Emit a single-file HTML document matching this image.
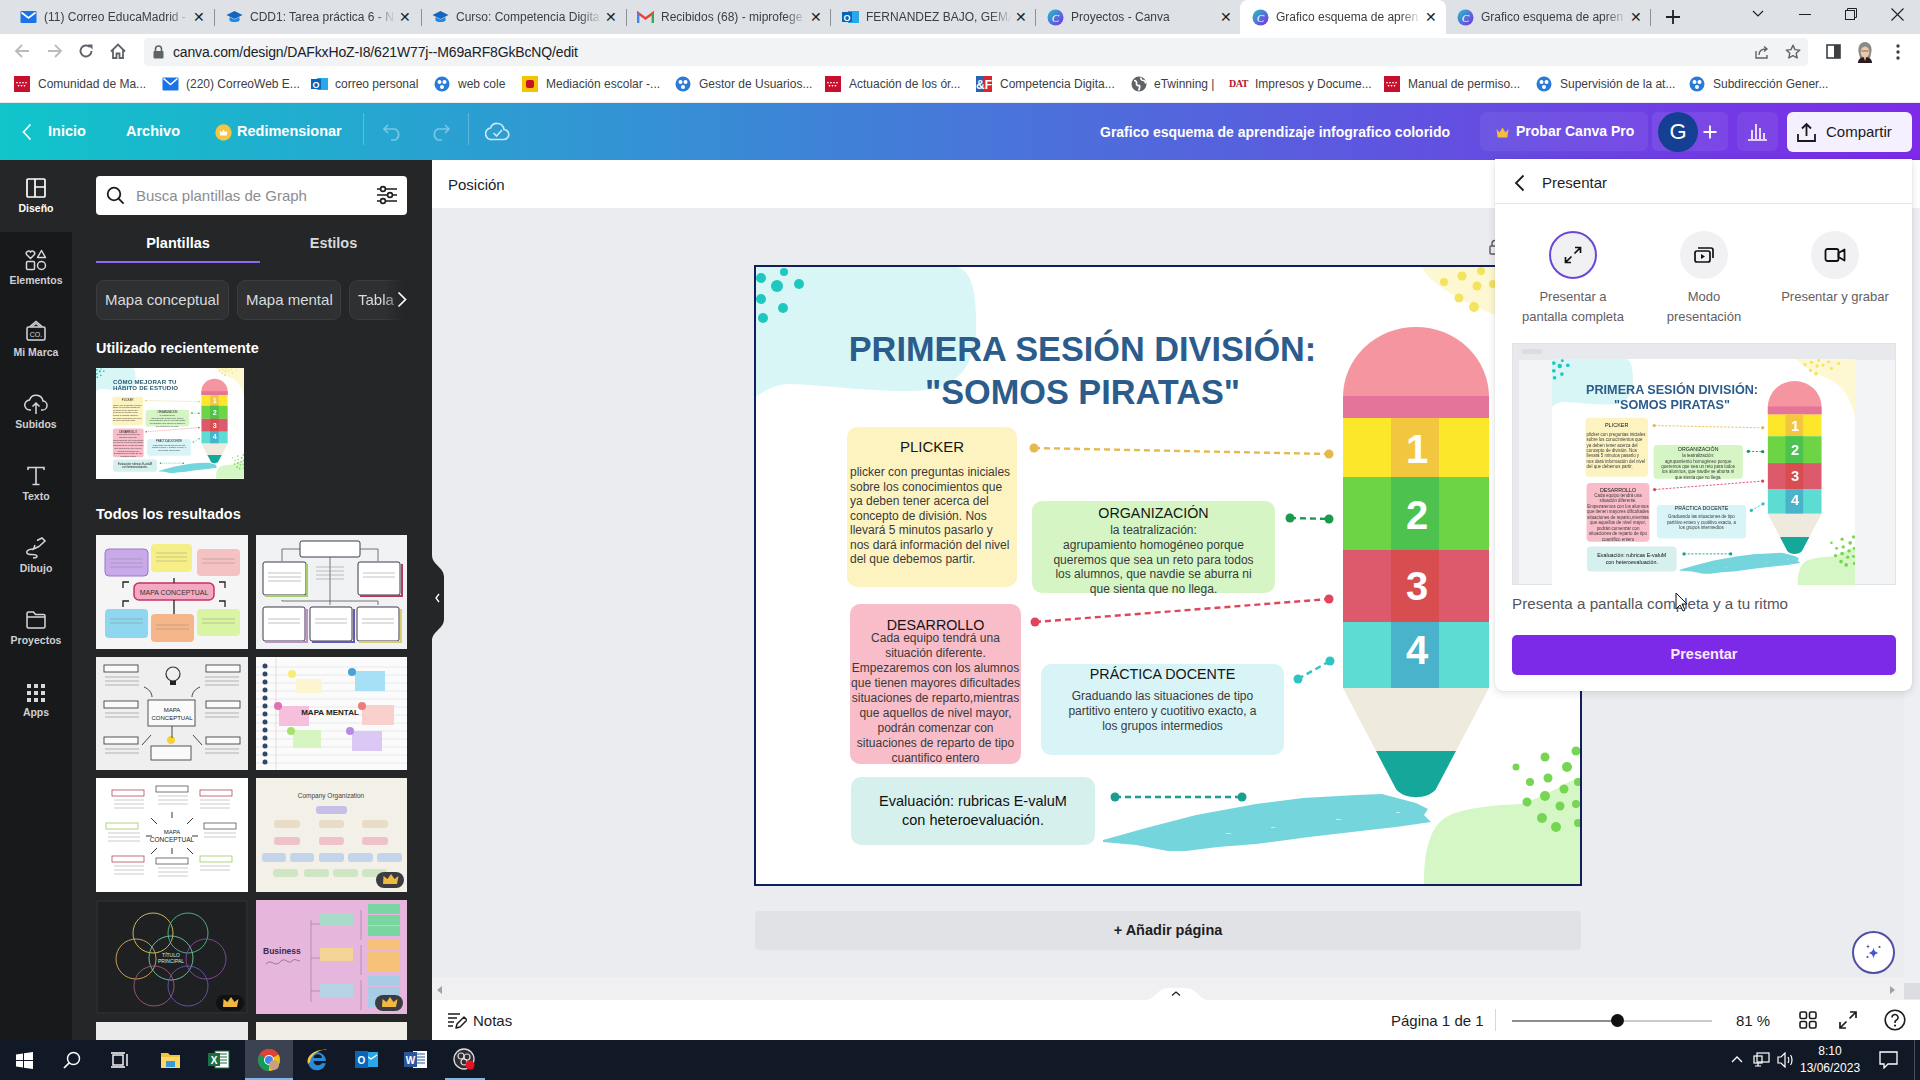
<!DOCTYPE html>
<html><head><meta charset="utf-8">
<style>
*{box-sizing:border-box;margin:0;padding:0}
html,body{width:1920px;height:1080px;overflow:hidden;background:#ebecf0;font-family:"Liberation Sans",sans-serif;position:relative}
.a{position:absolute}
.t{position:absolute;white-space:nowrap}
/* chrome */
#tabbar{left:0;top:0;width:1920px;height:34px;background:#dee1e6}
.tab{position:absolute;top:0;height:34px;width:205px}
.tab .ttl{position:absolute;left:36px;top:10px;font-size:12px;color:#3c4043;width:146px;overflow:hidden;white-space:nowrap;-webkit-mask-image:linear-gradient(90deg,#000 85%,transparent)}
.tab .x{position:absolute;left:185px;top:9px;font-size:14px;color:#202124}
.sep{position:absolute;top:9px;width:1px;height:17px;background:#8d9095}
#toolbar{left:0;top:34px;width:1920px;height:34px;background:#fff}
#omni{left:144px;top:38px;width:1664px;height:28px;background:#f1f3f4;border-radius:4px}
#bm{left:0;top:68px;width:1920px;height:34px;background:#fff}
.bmi{position:absolute;top:77px;font-size:12px;color:#3c4043;white-space:nowrap}
/* canva header */
#hdr{left:0;top:103px;width:1920px;height:57px;background:linear-gradient(90deg,#10c5ca 0%,#7d2ae8 100%)}
.rl{width:72px;text-align:center;font-size:10.5px;font-weight:bold;color:#cfd0d3}
.hw{color:#fff;font-weight:bold;font-size:14.5px}
#rail{left:0;top:160px;width:72px;height:880px;background:#18191b}
.chip{height:40px;border-radius:8px;background:#2f3032;border:1px solid #3b3c3f;color:#d9dadd;font-size:15px;line-height:38px;padding-left:8px;white-space:nowrap;overflow:hidden}
.dt{position:absolute;white-space:nowrap}
.db{position:absolute;border-radius:10px}
#panel{left:72px;top:160px;width:360px;height:880px;background:#252627}
#posbar{left:432px;top:160px;width:1488px;height:48px;background:#fff}
#botbar{left:432px;top:1000px;width:1488px;height:40px;background:#fff}
#taskbar{left:0;top:1040px;width:1920px;height:40px;background:#121926}
</style></head><body>
<!-- TAB BAR -->
<div id="tabbar" class="a">
 <!-- tab1 -->
 <div class="tab" style="left:8px">
  <svg class="a" style="left:12px;top:9px" width="17" height="16" viewBox="0 0 17 16"><rect x="0.5" y="2" width="16" height="12" rx="1" fill="#1a73e8"/><path d="M1.5 3.5 L8.5 9 L15.5 3.5" stroke="#fff" stroke-width="1.6" fill="none"/></svg>
  <div class="ttl">(11) Correo EducaMadrid -</div><div class="x">✕</div></div>
 <div class="sep" style="left:214px"></div>
 <div class="tab" style="left:214px">
  <svg class="a" style="left:12px;top:9px" width="17" height="16" viewBox="0 0 17 16"><path d="M8.5 2 L16.5 6 L8.5 10 L0.5 6Z" fill="#1565c0"/><path d="M3.5 8 V11.5 C5 13.5 12 13.5 13.5 11.5 V8 L8.5 10.5Z" fill="#1e88e5"/></svg>
  <div class="ttl">CDD1: Tarea práctica 6 - N</div><div class="x">✕</div></div>
 <div class="sep" style="left:421px"></div>
 <div class="tab" style="left:420px">
  <svg class="a" style="left:12px;top:9px" width="17" height="16" viewBox="0 0 17 16"><path d="M8.5 2 L16.5 6 L8.5 10 L0.5 6Z" fill="#1565c0"/><path d="M3.5 8 V11.5 C5 13.5 12 13.5 13.5 11.5 V8 L8.5 10.5Z" fill="#1e88e5"/></svg>
  <div class="ttl">Curso: Competencia Digita</div><div class="x">✕</div></div>
 <div class="sep" style="left:626px"></div>
 <div class="tab" style="left:625px">
  <svg class="a" style="left:12px;top:10px" width="17" height="14" viewBox="0 0 17 14"><path d="M1 13V3l7.5 5.5L16 3v10" fill="none" stroke="#ea4335" stroke-width="2.4"/><path d="M1 13V3" stroke="#4285f4" stroke-width="2.4"/><path d="M16 13V3" stroke="#34a853" stroke-width="2.4"/></svg>
  <div class="ttl">Recibidos (68) - miprofege</div><div class="x">✕</div></div>
 <div class="sep" style="left:830px"></div>
 <div class="tab" style="left:830px">
  <svg class="a" style="left:12px;top:9px" width="17" height="16" viewBox="0 0 17 16"><rect x="6" y="2" width="11" height="12" fill="#28a8ea"/><rect x="0" y="3" width="10" height="10" fill="#0a64b8"/><text x="5" y="11.5" font-size="9" font-weight="bold" fill="#fff" text-anchor="middle" font-family="Liberation Sans">O</text></svg>
  <div class="ttl">FERNANDEZ BAJO, GEMA</div><div class="x">✕</div></div>
 <div class="sep" style="left:1035px"></div>
 <div class="tab" style="left:1035px">
  <svg class="a" style="left:12px;top:9px" width="17" height="17" viewBox="0 0 17 17"><defs><linearGradient id="cg" x1="0" y1="0" x2="1" y2="1"><stop offset="0" stop-color="#23c4c4"/><stop offset="1" stop-color="#7d2ae8"/></linearGradient></defs><circle cx="8.5" cy="8.5" r="8" fill="url(#cg)"/><text x="8.5" y="12.5" font-size="11" font-style="italic" fill="#fff" text-anchor="middle" font-family="Liberation Serif">C</text></svg>
  <div class="ttl">Proyectos - Canva</div><div class="x">✕</div></div>
 <!-- active -->
 <div class="a" style="left:1240px;top:0;width:206px;height:34px;background:#fff;border-radius:8px 8px 0 0"></div>
 <div class="tab" style="left:1240px">
  <svg class="a" style="left:12px;top:9px" width="17" height="17" viewBox="0 0 17 17"><circle cx="8.5" cy="8.5" r="8" fill="url(#cg)"/><text x="8.5" y="12.5" font-size="11" font-style="italic" fill="#fff" text-anchor="middle" font-family="Liberation Serif">C</text></svg>
  <div class="ttl">Grafico esquema de apren</div><div class="x">✕</div></div>
 <div class="tab" style="left:1445px">
  <svg class="a" style="left:12px;top:9px" width="17" height="17" viewBox="0 0 17 17"><circle cx="8.5" cy="8.5" r="8" fill="url(#cg)"/><text x="8.5" y="12.5" font-size="11" font-style="italic" fill="#fff" text-anchor="middle" font-family="Liberation Serif">C</text></svg>
  <div class="ttl">Grafico esquema de apren</div><div class="x">✕</div></div>
 <div class="sep" style="left:1650px"></div>
 <svg class="a" style="left:1665px;top:9px" width="16" height="16" viewBox="0 0 16 16"><path d="M8 1v14M1 8h14" stroke="#202124" stroke-width="1.8"/></svg>
 <svg class="a" style="left:1752px;top:10px" width="12" height="8" viewBox="0 0 12 8"><path d="M1 1l5 5 5-5" stroke="#202124" stroke-width="1.2" fill="none"/></svg>
 <svg class="a" style="left:1799px;top:14px" width="12" height="2"><rect width="12" height="1" fill="#202124"/></svg>
 <svg class="a" style="left:1845px;top:8px" width="12" height="12" viewBox="0 0 12 12"><rect x="0.5" y="2.5" width="9" height="9" fill="none" stroke="#202124"/><path d="M2.5 2.5V0.5h9v9h-2" fill="none" stroke="#202124"/></svg>
 <svg class="a" style="left:1891px;top:8px" width="13" height="13" viewBox="0 0 13 13"><path d="M0.5 0.5l12 12M12.5 0.5l-12 12" stroke="#202124" stroke-width="1.1"/></svg>
</div>
<!-- TOOLBAR -->
<div id="toolbar" class="a">
 <svg class="a" style="left:14px;top:9px" width="16" height="16" viewBox="0 0 16 16"><path d="M15 8H2M8 2L2 8l6 6" stroke="#b9bbbe" stroke-width="1.8" fill="none"/></svg>
 <svg class="a" style="left:47px;top:9px" width="16" height="16" viewBox="0 0 16 16"><path d="M1 8h13M8 2l6 6-6 6" stroke="#b9bbbe" stroke-width="1.8" fill="none"/></svg>
 <svg class="a" style="left:78px;top:9px" width="16" height="16" viewBox="0 0 16 16"><path d="M13.5 8A5.5 5.5 0 1 1 11.8 4" stroke="#5f6368" stroke-width="1.9" fill="none"/><path d="M9.5 1.5h5v5z" fill="#5f6368"/></svg>
 <svg class="a" style="left:109px;top:8px" width="18" height="18" viewBox="0 0 18 18"><path d="M2 9.5L9 2.5l7 7M4 8v8h3.5v-4.5h3V16H14V8" stroke="#5f6368" stroke-width="1.8" fill="none"/></svg>
</div>
<div id="omni" class="a">
 <svg class="a" style="left:9px;top:7px" width="11" height="14" viewBox="0 0 11 14"><path d="M2.5 6V4a3 3 0 0 1 6 0v2" stroke="#5f6368" stroke-width="1.6" fill="none"/><rect x="0.5" y="6" width="10" height="7.5" rx="1" fill="#5f6368"/></svg>
 <div class="t" style="left:29px;top:6px;font-size:14px;color:#202124;letter-spacing:-0.15px">canva.com/design/DAFkxHoZ-I8/621W77j--M69aRF8GkBcNQ/edit</div>
 <svg class="a" style="left:1609px;top:6px" width="17" height="16" viewBox="0 0 17 16"><path d="M3 7v7h11v-3" stroke="#5f6368" stroke-width="1.4" fill="none"/><path d="M6 11c0-4 3-6 7-6M11 2.5l3 2.5-3 2.5" stroke="#5f6368" stroke-width="1.4" fill="none"/></svg>
 <svg class="a" style="left:1641px;top:6px" width="16" height="16" viewBox="0 0 16 16"><path d="M8 1.2l2 4.4 4.8.5-3.6 3.2 1 4.7L8 11.6 3.8 14l1-4.7L1.2 6.1l4.8-.5z" stroke="#5f6368" stroke-width="1.4" fill="none" stroke-linejoin="round"/></svg>
</div>
<svg class="a" style="left:1826px;top:44px" width="15" height="15" viewBox="0 0 15 15"><rect x="1" y="1" width="13" height="13" fill="none" stroke="#3c4043" stroke-width="1.6"/><rect x="8" y="1" width="6" height="13" fill="#3c4043"/></svg>
<svg class="a" style="left:1857px;top:42px" width="16" height="21" viewBox="0 0 16 21"><path d="M2 12C0 5 3 0 8 0s8 5 6 12l-1 4H3z" fill="#8a8a86"/><ellipse cx="8" cy="10" rx="4.3" ry="5.5" fill="#ecc9a8"/><path d="M4.5 9h7" stroke="#555" stroke-width="0.8"/><path d="M1 21c0-4 3-6 7-6s7 2 7 6z" fill="#2a1c1e"/><path d="M6.5 15l1.5 4 1.5-4" fill="#e8a8b0"/></svg>
<svg class="a" style="left:1896px;top:44px" width="4" height="16" viewBox="0 0 4 16"><circle cx="2" cy="2" r="1.7" fill="#3c4043"/><circle cx="2" cy="8" r="1.7" fill="#3c4043"/><circle cx="2" cy="14" r="1.7" fill="#3c4043"/></svg>
<!-- BOOKMARKS -->
<div id="bm" class="a"></div>
<svg class="a" style="left:14px;top:76px" width="16" height="16" viewBox="0 0 16 16"><rect width="16" height="16" fill="#c8102e"/><g fill="#fff"><path d="M2 6l1 2 1-2zM5 6l1 2 1-2zM8 6l1 2 1-2zM11 6l1 2 1-2zM3.5 9l1 2 1-2zM6.5 9l1 2 1-2zM9.5 9l1 2 1-2z"/></g></svg>
<div class="bmi" style="left:38px">Comunidad de Ma...</div>
<svg class="a" style="left:162px;top:77px" width="17" height="14" viewBox="0 0 17 14"><rect x="0.5" y="0.5" width="16" height="13" rx="1" fill="#1a73e8"/><path d="M1.5 1.5 L8.5 7.5 L15.5 1.5" stroke="#fff" stroke-width="1.6" fill="none"/></svg>
<div class="bmi" style="left:186px">(220) CorreoWeb E...</div>
<svg class="a" style="left:311px;top:76px" width="17" height="16" viewBox="0 0 17 16"><rect x="6" y="2" width="11" height="12" fill="#28a8ea"/><rect x="0" y="3" width="10" height="10" fill="#0a64b8"/><text x="5" y="11.5" font-size="9" font-weight="bold" fill="#fff" text-anchor="middle" font-family="Liberation Sans">O</text></svg>
<div class="bmi" style="left:335px">correo personal</div>
<svg class="a" style="left:434px;top:76px" width="16" height="16" viewBox="0 0 16 16"><circle cx="8" cy="8" r="7.5" fill="#2a7bd6"/><circle cx="5.5" cy="6" r="2" fill="#fff"/><circle cx="10.5" cy="6" r="2" fill="#fff"/><circle cx="8" cy="11" r="2" fill="#fff"/></svg>
<div class="bmi" style="left:458px">web cole</div>
<div class="a" style="left:522px;top:76px;width:16px;height:16px;background:#f5c400"><div class="a" style="left:4px;top:4px;width:8px;height:8px;background:#c8102e;border-radius:2px"></div></div>
<div class="bmi" style="left:546px">Mediación escolar -...</div>
<svg class="a" style="left:675px;top:76px" width="16" height="16" viewBox="0 0 16 16"><circle cx="8" cy="8" r="7.5" fill="#2a7bd6"/><circle cx="5.5" cy="6" r="2" fill="#fff"/><circle cx="10.5" cy="6" r="2" fill="#fff"/><circle cx="8" cy="11" r="2" fill="#fff"/></svg>
<div class="bmi" style="left:699px">Gestor de Usuarios...</div>
<svg class="a" style="left:825px;top:76px" width="16" height="16" viewBox="0 0 16 16"><rect width="16" height="16" fill="#c8102e"/><g fill="#fff"><path d="M2 6l1 2 1-2zM5 6l1 2 1-2zM8 6l1 2 1-2zM11 6l1 2 1-2zM3.5 9l1 2 1-2zM6.5 9l1 2 1-2zM9.5 9l1 2 1-2z"/></g></svg>
<div class="bmi" style="left:849px">Actuación de los ór...</div>
<svg class="a" style="left:976px;top:76px" width="16" height="16" viewBox="0 0 16 16"><rect width="8" height="16" fill="#2e5fb0"/><rect x="8" width="8" height="16" fill="#d8262e"/><text x="8" y="13" font-size="12" font-weight="bold" fill="#fff" text-anchor="middle" font-family="Liberation Sans">&amp;F</text></svg>
<div class="bmi" style="left:1000px">Competencia Digita...</div>
<svg class="a" style="left:1131px;top:76px" width="16" height="16" viewBox="0 0 16 16"><circle cx="8" cy="8" r="7.5" fill="#5f6368"/><path d="M3 4.5c2 0 3 1.5 2.5 3S7 10 8 9.5s1 3-.5 5M10 1.5c-.5 2 1 3 2.5 3s2 1.5 2 3" stroke="#fff" stroke-width="1.7" fill="none"/></svg>
<div class="bmi" style="left:1154px">eTwinning |</div>
<div class="t" style="left:1229px;top:78px;font-size:10px;font-weight:bold;color:#b5132b;font-family:'Liberation Serif',serif;letter-spacing:-0.5px">DAT</div>
<div class="bmi" style="left:1255px">Impresos y Docume...</div>
<svg class="a" style="left:1384px;top:76px" width="16" height="16" viewBox="0 0 16 16"><rect width="16" height="16" fill="#c8102e"/><g fill="#fff"><path d="M2 6l1 2 1-2zM5 6l1 2 1-2zM8 6l1 2 1-2zM11 6l1 2 1-2zM3.5 9l1 2 1-2zM6.5 9l1 2 1-2zM9.5 9l1 2 1-2z"/></g></svg>
<div class="bmi" style="left:1408px">Manual de permiso...</div>
<svg class="a" style="left:1536px;top:76px" width="16" height="16" viewBox="0 0 16 16"><circle cx="8" cy="8" r="7.5" fill="#2a7bd6"/><circle cx="5.5" cy="6" r="2" fill="#fff"/><circle cx="10.5" cy="6" r="2" fill="#fff"/><circle cx="8" cy="11" r="2" fill="#fff"/></svg>
<div class="bmi" style="left:1560px">Supervisión de la at...</div>
<svg class="a" style="left:1689px;top:76px" width="16" height="16" viewBox="0 0 16 16"><circle cx="8" cy="8" r="7.5" fill="#2a7bd6"/><circle cx="5.5" cy="6" r="2" fill="#fff"/><circle cx="10.5" cy="6" r="2" fill="#fff"/><circle cx="8" cy="11" r="2" fill="#fff"/></svg>
<div class="bmi" style="left:1713px">Subdirección Gener...</div>
<div id="hdr" class="a">
 <svg class="a" style="left:22px;top:20px" width="10" height="18" viewBox="0 0 10 18"><path d="M8.5 1.5L1.5 9l7 7.5" stroke="#fff" stroke-width="1.6" fill="none"/></svg>
 <div class="t hw" style="left:48px;top:20px">Inicio</div>
 <div class="t hw" style="left:126px;top:20px">Archivo</div>
 <svg class="a" style="left:215px;top:21px" width="17" height="17" viewBox="0 0 17 17"><circle cx="8.5" cy="8.5" r="8.2" fill="#f2c544"/><path d="M4.5 6.5l2 2 2-3 2 3 2-2-.8 5H5.3z" fill="#fff"/></svg>
 <div class="t hw" style="left:237px;top:20px">Redimensionar</div>
 <div class="a" style="left:363px;top:10px;width:1px;height:32px;background:rgba(255,255,255,0.25)"></div>
 <svg class="a" style="left:382px;top:20px" width="22" height="18" viewBox="0 0 22 18"><path d="M6 2L2 6l4 4M2 6h11a6 6 0 0 1 0 11H9" stroke="rgba(255,255,255,0.38)" stroke-width="1.7" fill="none"/></svg>
 <svg class="a" style="left:429px;top:20px" width="22" height="18" viewBox="0 0 22 18"><path d="M16 2l4 4-4 4M20 6H9a6 6 0 0 0 0 11h4" stroke="rgba(255,255,255,0.38)" stroke-width="1.7" fill="none"/></svg>
 <div class="a" style="left:468px;top:10px;width:1px;height:32px;background:rgba(255,255,255,0.25)"></div>
 <svg class="a" style="left:485px;top:18px" width="25" height="20" viewBox="0 0 25 20"><path d="M7 18.5h11.5a5 5 0 0 0 .5-10A7 7 0 0 0 5.5 7 5.8 5.8 0 0 0 7 18.5z" stroke="rgba(255,255,255,0.75)" stroke-width="1.7" fill="none"/><path d="M8.5 12l3 3 5.5-6" stroke="rgba(255,255,255,0.75)" stroke-width="1.7" fill="none"/></svg>
 <div class="t hw" style="left:1100px;top:21px;font-size:14px">Grafico esquema de aprendizaje infografico colorido</div>
 <div class="a" style="left:1480px;top:9px;width:168px;height:39px;border-radius:6px;background:rgba(255,255,255,0.06)"></div>
 <svg class="a" style="left:1496px;top:24px" width="13" height="11" viewBox="0 0 13 11"><path d="M0.5 2l3 3.5L6.5 0.5l3 5 3-3.5-1.2 8.5H1.7z" fill="#f4bd3f"/></svg>
 <div class="t hw" style="left:1516px;top:20px;font-size:14px">Probar Canva Pro</div>
 <div class="a" style="left:1652px;top:9px;width:76px;height:39px;border-radius:6px;background:rgba(255,255,255,0.07)"></div>
 <div class="a" style="left:1658px;top:9px;width:40px;height:40px;border-radius:50%;background:#153f92;color:#fff;font-size:22px;text-align:center;line-height:40px">G</div>
 <svg class="a" style="left:1703px;top:22px" width="14" height="14" viewBox="0 0 14 14"><path d="M7 0.5v13M0.5 7h13" stroke="#fff" stroke-width="1.8"/></svg>
 <div class="a" style="left:1737px;top:9px;width:41px;height:39px;border-radius:6px;background:rgba(255,255,255,0.07)"></div>
 <svg class="a" style="left:1747px;top:18px" width="21" height="20" viewBox="0 0 21 20"><path d="M1 19h19M5 18V9M9 18V3M13 18V7M17 18V12" stroke="#fff" stroke-width="1.6"/></svg>
 <div class="a" style="left:1787px;top:9px;width:125px;height:40px;border-radius:6px;background:#f5f0fd"></div>
 <svg class="a" style="left:1796px;top:19px" width="21" height="21" viewBox="0 0 21 21"><path d="M10.5 14V2M6 6.5l4.5-4.5 4.5 4.5M2 12v7h17v-7" stroke="#191a1c" stroke-width="1.8" fill="none"/></svg>
 <div class="t" style="left:1826px;top:20px;font-size:15px;color:#191a1c">Compartir</div>
</div>
<div id="rail" class="a"></div>
<div class="a" style="left:0;top:160px;width:72px;height:72px;background:#252627"></div>
<svg class="a" style="left:26px;top:178px" width="20" height="20" viewBox="0 0 20 20"><rect x="1" y="1" width="18" height="18" rx="1" fill="none" stroke="#fff" stroke-width="1.7"/><path d="M9 1v18M9 9h10" stroke="#fff" stroke-width="1.7"/></svg>
<div class="t rl" style="left:0;top:202px;color:#fff">Diseño</div>
<svg class="a" style="left:25px;top:249px" width="22" height="22" viewBox="0 0 22 22"><path d="M5.5 9.5L1.8 5.8A2.2 2.2 0 0 1 5.5 3 2.2 2.2 0 0 1 9.2 5.8z" stroke="#d6d7da" stroke-width="1.5" fill="none"/><path d="M16.5 1.5l4 7h-8z" stroke="#d6d7da" stroke-width="1.5" fill="none" stroke-linejoin="round"/><rect x="1.5" y="12.5" width="8" height="8" rx="1" stroke="#d6d7da" stroke-width="1.5" fill="none"/><circle cx="16.5" cy="16.5" r="4" stroke="#d6d7da" stroke-width="1.5" fill="none"/></svg>
<div class="t rl" style="left:0;top:274px">Elementos</div>
<svg class="a" style="left:26px;top:320px" width="20" height="22" viewBox="0 0 20 22"><path d="M4 6.5l6-5 6 5" stroke="#d6d7da" stroke-width="1.5" fill="none"/><path d="M6 6.5l4-3 4 3" stroke="#d6d7da" stroke-width="1.2" fill="none"/><rect x="1" y="7" width="18" height="13" rx="1.5" stroke="#d6d7da" stroke-width="1.5" fill="none"/><text x="10" y="17" font-size="7" fill="#d6d7da" text-anchor="middle" font-family="Liberation Sans">CO.</text></svg>
<div class="t rl" style="left:0;top:346px">Mi Marca</div>
<svg class="a" style="left:24px;top:393px" width="24" height="22" viewBox="0 0 24 22"><path d="M7 17H6a5 5 0 0 1-.5-10A7 7 0 0 1 19 8a4.5 4.5 0 0 1-1 9h-1" stroke="#d6d7da" stroke-width="1.5" fill="none"/><path d="M12 21V10M8.5 13.5L12 10l3.5 3.5" stroke="#d6d7da" stroke-width="1.5" fill="none"/></svg>
<div class="t rl" style="left:0;top:418px">Subidos</div>
<svg class="a" style="left:26px;top:466px" width="20" height="20" viewBox="0 0 20 20"><path d="M2 4V1.5h16V4M10 1.5V18.5M6.5 18.5h7" stroke="#d6d7da" stroke-width="1.6" fill="none"/></svg>
<div class="t rl" style="left:0;top:490px">Texto</div>
<svg class="a" style="left:25px;top:537px" width="22" height="22" viewBox="0 0 22 22"><path d="M12 3.5l5-2.5 3 3-6 5.5M14 9.5L8.5 12l1.5-4" stroke="#d6d7da" stroke-width="1.5" fill="none"/><path d="M9 12c-4 0-8 1-7 4s9 0 10 3c.5 1.5-2 2-4 2" stroke="#d6d7da" stroke-width="1.5" fill="none"/></svg>
<div class="t rl" style="left:0;top:562px">Dibujo</div>
<svg class="a" style="left:26px;top:611px" width="20" height="18" viewBox="0 0 20 18"><path d="M1 2.5a1.5 1.5 0 0 1 1.5-1.5h5l2 2.5h8A1.5 1.5 0 0 1 19 5v10.5A1.5 1.5 0 0 1 17.5 17h-15A1.5 1.5 0 0 1 1 15.5z" stroke="#d6d7da" stroke-width="1.5" fill="none"/><path d="M1 6h18" stroke="#d6d7da" stroke-width="1.5"/></svg>
<div class="t rl" style="left:0;top:634px">Proyectos</div>
<svg class="a" style="left:27px;top:684px" width="18" height="18" viewBox="0 0 18 18"><g fill="#d6d7da"><rect x="0" y="0" width="4" height="4"/><rect x="7" y="0" width="4" height="4"/><rect x="14" y="0" width="4" height="4"/><rect x="0" y="7" width="4" height="4"/><rect x="7" y="7" width="4" height="4"/><rect x="14" y="7" width="4" height="4"/><rect x="0" y="14" width="4" height="4"/><rect x="7" y="14" width="4" height="4"/><rect x="14" y="14" width="4" height="4"/></g></svg>
<div class="t rl" style="left:0;top:706px">Apps</div>
<div id="panel" class="a"></div>
<div class="a" style="left:96px;top:176px;width:311px;height:39px;background:#fff;border-radius:4px"></div>
<svg class="a" style="left:106px;top:186px" width="20" height="20" viewBox="0 0 20 20"><circle cx="8" cy="8" r="6.3" stroke="#1d1d1f" stroke-width="1.8" fill="none"/><path d="M12.6 12.6l5 5" stroke="#1d1d1f" stroke-width="1.9"/></svg>
<div class="t" style="left:136px;top:187px;font-size:15px;color:#8c8c90">Busca plantillas de Graph</div>
<svg class="a" style="left:376px;top:185px" width="21" height="20" viewBox="0 0 21 20"><g stroke="#1d1d1f" stroke-width="1.6" fill="none"><path d="M1 4h20M1 10h20M1 16h20"/><circle cx="7" cy="4" r="2.4" fill="#fff"/><circle cx="14" cy="10" r="2.4" fill="#fff"/><circle cx="7" cy="16" r="2.4" fill="#fff"/></g></svg>
<div class="t" style="left:96px;top:235px;width:164px;text-align:center;font-size:14.5px;font-weight:bold;color:#fff">Plantillas</div>
<div class="t" style="left:260px;top:235px;width:147px;text-align:center;font-size:14.5px;font-weight:bold;color:#d8d9dc">Estilos</div>
<div class="a" style="left:96px;top:261px;width:164px;height:2px;background:#8b6cf0"></div>
<div class="a chip" style="left:96px;top:280px;width:133px">Mapa conceptual</div>
<div class="a chip" style="left:237px;top:280px;width:104px">Mapa mental</div>
<div class="a chip" style="left:349px;top:280px;width:58px;-webkit-mask-image:linear-gradient(90deg,#000 60%,transparent 95%)">Tabla</div>
<svg class="a" style="left:397px;top:291px" width="10" height="17" viewBox="0 0 10 17"><path d="M1.5 1.5l7 7-7 7" stroke="#fff" stroke-width="1.7" fill="none"/></svg>
<div class="t" style="left:96px;top:340px;font-size:14.5px;font-weight:bold;color:#fff">Utilizado recientemente</div>
<div class="a" style="left:96px;top:368px;width:148px;height:111px;overflow:hidden;background:#fff"><div style="position:absolute;left:0;top:0;width:824px;height:617px;transform:scale(0.1796);transform-origin:0 0"><div class="dz" style="position:absolute;left:0;top:0;width:824px;height:617px;background:#fff;overflow:hidden">
 <svg style="position:absolute;left:0;top:0" width="824" height="617" viewBox="0 0 824 617">
  <path d="M0 0 H200 C214 2 221 20 220 64 C219 95 205 118 170 123 C130 127 70 118 35 117 C18 117 8 124 0 130 Z" fill="#d9f6f6"/>
  <g fill="#1ec8be"><circle cx="5" cy="11" r="5"/><circle cx="28" cy="5" r="4"/><circle cx="21" cy="19" r="6"/><circle cx="43" cy="17" r="5"/><circle cx="5" cy="32" r="5"/><circle cx="27" cy="41" r="5"/><circle cx="7" cy="51" r="5"/></g>
  <path d="M667 0 H824 V155 C815 120 803 92 775 68 C750 50 705 36 682 18 C672 10 667 4 667 0Z" fill="#fdf7d2"/>
  <g fill="#f4e35e"><circle cx="688" cy="15" r="4"/><circle cx="706" cy="9" r="4.5"/><circle cx="725" cy="4" r="4"/><circle cx="721" cy="19" r="4.5"/><circle cx="703" cy="31" r="4.5"/><circle cx="718" cy="40" r="5"/><circle cx="737" cy="17" r="4"/><circle cx="752" cy="8" r="4"/><circle cx="760" cy="26" r="4"/><circle cx="780" cy="12" r="4"/></g>
  <path d="M668 617 C668 580 675 560 690 550 C710 540 740 538 764 537 C790 530 810 515 824 510 V617Z" fill="#d5f7c5"/>
  <g fill="#76d653"><circle cx="789" cy="490" r="4.5"/><circle cx="820" cy="484" r="4.5"/><circle cx="811" cy="500" r="5"/><circle cx="792" cy="511" r="4.5"/><circle cx="774" cy="515" r="4"/><circle cx="808" cy="522" r="4.5"/><circle cx="822" cy="515" r="4"/><circle cx="789" cy="529" r="5"/><circle cx="771" cy="535" r="4.5"/><circle cx="804" cy="539" r="4.5"/><circle cx="820" cy="537" r="4"/><circle cx="786" cy="551" r="5"/><circle cx="800" cy="560" r="5"/><circle cx="822" cy="556" r="4"/><circle cx="760" cy="500" r="3.5"/></g>
  <path d="M347 573 L390 561 L440 548 L500 537 L547 531 L600 528 L626 527 L660 536 L672 542 L668 548 L675 555 L640 560 L622 562 L553 570 L500 577 L462 580 L430 584 L412 584 L380 578 L347 575Z" fill="#75d5dc"/>
  <g fill="#fff" opacity="0.6"><rect x="470" y="566" width="5" height="1"/><rect x="515" y="560" width="4" height="1"/><rect x="580" y="552" width="5" height="1"/><rect x="640" y="545" width="4" height="1"/></g>
  <!-- pencil -->
  <path d="M587 130 A73 70 0 0 1 733 130 V151 H587Z" fill="#f5959f"/>
  <rect x="587" y="129" width="146" height="22" fill="#e4749a"/>
  <rect x="587" y="151" width="146" height="59" fill="#fde72b"/><rect x="635" y="151" width="48" height="59" fill="#f2c73f"/>
  <rect x="587" y="210" width="146" height="73" fill="#6cd445"/><rect x="635" y="210" width="48" height="73" fill="#4dc24e"/>
  <rect x="587" y="283" width="146" height="72" fill="#dd5a6d"/><rect x="635" y="283" width="48" height="72" fill="#d84d50"/>
  <rect x="587" y="355" width="146" height="66" fill="#5cdcd3"/><rect x="635" y="355" width="48" height="66" fill="#4ab3cc"/>
  <path d="M587 421 H733 L700 484 H620Z" fill="#eeeadd"/>
  <path d="M620 484 H700 L680 522 C672 533 648 533 640 522Z" fill="#15a799"/>
  <g fill="#fff" font-family="Liberation Sans" font-weight="bold" font-size="40" text-anchor="middle"><text x="661" y="196">1</text><text x="661" y="262">2</text><text x="661" y="333">3</text><text x="661" y="397">4</text></g>
  <!-- connectors -->
  <g stroke-width="2.4" stroke-dasharray="6 4" fill="none">
   <path d="M278 181 L573 187" stroke="#e6b94c"/>
   <path d="M534 251 L573 252" stroke="#1a9a4c"/>
   <path d="M279 355 L573 332" stroke="#e0455c"/>
   <path d="M542 412 L574 394" stroke="#2fc3c3"/>
   <path d="M359 530 L486 530" stroke="#1b9e8f"/>
  </g>
  <g><circle cx="278" cy="181" r="4.5" fill="#e6b94c"/><circle cx="573" cy="187" r="4.5" fill="#e6b94c"/>
  <circle cx="534" cy="251" r="4.5" fill="#1a9a4c"/><circle cx="573" cy="252" r="4.5" fill="#1a9a4c"/>
  <circle cx="279" cy="355" r="4.5" fill="#e0455c"/><circle cx="573" cy="332" r="4.5" fill="#e0455c"/>
  <circle cx="542" cy="412" r="4.5" fill="#2fc3c3"/><circle cx="574" cy="394" r="4.5" fill="#2fc3c3"/>
  <circle cx="359" cy="530" r="4.5" fill="#1b9e8f"/><circle cx="486" cy="530" r="4.5" fill="#1b9e8f"/></g>
 </svg>
 <div class="dt" style="left:94px;top:62px;font-size:34px;line-height:33px;font-weight:bold;color:#2a5a72;letter-spacing:1px">CÓMO MEJORAR TU<br>HÁBITO DE ESTUDIO</div>
 <div class="db" style="left:91px;top:160px;width:170px;height:160px;background:#fdf3c1"></div>
 <div class="dt" style="left:91px;top:171px;width:170px;text-align:center;font-size:15px;color:#151515">PLICKER</div>
 <div class="dt" style="left:94px;top:198px;width:170px;font-size:12px;line-height:14.5px;color:#3a3a3a">plicker con preguntas iniciales<br>sobre los conocimientos que<br>ya deben tener acerca del<br>concepto de división. Nos<br>llevará 5 minutos pasarlo y<br>nos dará información del nivel<br>del que debemos partir.</div>
 <div class="db" style="left:276px;top:234px;width:243px;height:92px;background:#d5f5c5"></div>
 <div class="dt" style="left:276px;top:238px;width:243px;text-align:center;font-size:14.3px;color:#151515">ORGANIZACIÓN</div>
 <div class="dt" style="left:266px;top:256px;width:263px;text-align:center;font-size:12px;line-height:14.8px;color:#3a3a3a">la teatralización:<br>agrupamiento homogéneo porque<br>queremos que sea un reto para todos<br>los alumnos, que navdie se aburra ni<br>que sienta que no llega.</div>
 <div class="db" style="left:94px;top:337px;width:171px;height:160px;background:#f8bdc8"></div>
 <div class="dt" style="left:94px;top:350px;width:171px;text-align:center;font-size:14.3px;color:#151515">DESARROLLO</div>
 <div class="dt" style="left:84px;top:364px;width:191px;text-align:center;font-size:12px;line-height:15px;color:#3a3a3a">Cada equipo tendrá una<br>situación diferente.<br>Empezaremos con  los alumnos<br>que tienen mayores dificultades<br>situaciones de reparto,mientras<br>que aquellos de nivel mayor,<br>podrán comenzar con<br>situaciones de reparto de tipo<br>cuantifico entero</div>
 <div class="db" style="left:285px;top:397px;width:243px;height:91px;background:#d8f4f6"></div>
 <div class="dt" style="left:285px;top:399px;width:243px;text-align:center;font-size:14.3px;color:#151515">PRÁCTICA DOCENTE</div>
 <div class="dt" style="left:275px;top:422px;width:263px;text-align:center;font-size:12px;line-height:15px;color:#3a3a3a">Graduando las situaciones de tipo<br>partitivo entero y cuotitivo exacto, a<br>los grupos intermedios</div>
 <div class="db" style="left:95px;top:510px;width:244px;height:68px;background:#d6f0ee"></div>
 <div class="dt" style="left:95px;top:525px;width:244px;text-align:center;font-size:14.5px;line-height:19px;color:#111">Evaluación: rubricas E-valuM<br>con heteroevaluación.</div>
</div>
</div></div>
<div class="t" style="left:96px;top:506px;font-size:14.5px;font-weight:bold;color:#fff">Todos los resultados</div>
<!-- thumbs -->
<svg class="a" style="left:96px;top:535px" width="152" height="114" viewBox="0 0 152 114"><rect width="152" height="114" fill="#f5f5f5"/>
 <rect x="9" y="14" width="43" height="27" rx="4" fill="#c9a9ea" stroke="#9a78c8" stroke-width="1"/><rect x="55" y="9" width="41" height="28" rx="4" fill="#f6ef88"/><rect x="101" y="14" width="43" height="27" rx="4" fill="#f4c2c2"/>
 <rect x="38" y="48" width="80" height="17" rx="5" fill="#f4a9c2" stroke="#c83263" stroke-width="1.5"/><text x="78" y="60" font-size="7" text-anchor="middle" fill="#333" font-family="Liberation Sans">MAPA CONCEPTUAL</text>
 <rect x="9" y="74" width="43" height="29" rx="4" fill="#8fd7f0"/><rect x="55" y="79" width="43" height="28" rx="4" fill="#f5b78a"/><rect x="101" y="74" width="43" height="27" rx="4" fill="#d9f4a2"/>
 <g stroke="#222" stroke-width="1.3" fill="none"><path d="M78 43v5M78 65v14M33 47h-6v6M123 47h6v6M33 66h-6v6M123 66h6v6"/></g>
 <g stroke="#777" stroke-width="0.6" opacity="0.6"><path d="M14 24h33M14 28h33M14 32h33M60 18h31M60 22h31M60 26h31M106 24h33M106 28h33M14 84h33M14 88h33M60 90h33M60 94h33M106 84h33M106 88h33"/></g></svg>
<svg class="a" style="left:256px;top:535px" width="151" height="114" viewBox="0 0 151 114"><rect width="151" height="114" fill="#f1f2f4"/>
 <g fill="#fff" stroke="#3a3a4a" stroke-width="1"><rect x="44" y="6" width="60" height="16" rx="2"/></g>
 <g stroke="#555" stroke-width="0.8" fill="none"><path d="M44 14H26v12M104 14h18v12M74 22v48M26 65V66h96v4"/></g>
 <rect x="7" y="27" width="43" height="33" rx="2" fill="#fff" stroke="#3a3a4a" stroke-width="1"/><path d="M9 61h42V29" stroke="#a6cf68" stroke-width="2" fill="none"/>
 <rect x="102" y="27" width="42" height="33" rx="2" fill="#fff" stroke="#3a3a4a" stroke-width="1"/><path d="M104 61h42V29" stroke="#b83a5a" stroke-width="2" fill="none"/>
 <rect x="7" y="72" width="42" height="34" rx="2" fill="#fff" stroke="#3a3a4a" stroke-width="1"/><path d="M9 107h42V74" stroke="#c090c8" stroke-width="2" fill="none"/>
 <rect x="54" y="72" width="42" height="34" rx="2" fill="#fff" stroke="#3a3a4a" stroke-width="1"/><path d="M56 107h42V74" stroke="#6a58b8" stroke-width="2" fill="none"/>
 <rect x="101" y="72" width="42" height="34" rx="2" fill="#fff" stroke="#3a3a4a" stroke-width="1"/><path d="M103 107h42V74" stroke="#d8d070" stroke-width="2" fill="none"/>
 <g stroke="#999" stroke-width="0.6"><path d="M12 38h33M12 42h33M12 46h33M107 38h32M107 42h32M12 84h32M12 88h32M59 84h32M59 88h32M106 84h32M106 88h32M60 32h28M60 36h28M60 40h28M60 44h28"/></g></svg>
<svg class="a" style="left:96px;top:657px" width="152" height="113" viewBox="0 0 152 113"><rect width="152" height="113" fill="#efefef"/>
 <g fill="#fafafa" stroke="#444" stroke-width="0.9"><rect x="8" y="8" width="34" height="7"/><rect x="110" y="8" width="34" height="7"/><rect x="8" y="44" width="34" height="7"/><rect x="110" y="44" width="34" height="7"/><rect x="8" y="80" width="34" height="7"/><rect x="110" y="80" width="34" height="7"/><rect x="52" y="43" width="47" height="26"/><rect x="55" y="89" width="40" height="14"/></g>
 <circle cx="77" cy="17" r="7" fill="none" stroke="#333" stroke-width="1.2"/><rect x="74" y="24" width="6" height="4" fill="#222"/><circle cx="75" cy="83" r="4" fill="#f5d23a"/>
 <text x="76" y="55" font-size="6" text-anchor="middle" fill="#222" font-family="Liberation Sans">MAPA</text><text x="76" y="63" font-size="6" text-anchor="middle" fill="#222" font-family="Liberation Sans">CONCEPTUAL</text>
 <g stroke="#888" stroke-width="0.6"><path d="M9 20h34M9 24h34M9 28h34M109 20h34M109 24h34M109 28h34M9 56h34M9 60h34M109 56h34M109 60h34M9 92h34M9 96h34M109 92h34M109 96h34"/></g>
 <g stroke="#333" stroke-width="0.9" fill="none"><path d="M48 30c5 2 8 6 8 10M104 30c-5 2-8 6-8 10M76 69v12M55 78l-9 10M97 78l9 10"/></g></svg>
<svg class="a" style="left:256px;top:657px" width="151" height="113" viewBox="0 0 151 113"><rect width="151" height="113" fill="#fbfbfb"/>
 <g stroke="#dcdde3" stroke-width="0.6"><path d="M0 10h151M0 18h151M0 26h151M0 34h151M0 42h151M0 50h151M0 58h151M0 66h151M0 74h151M0 82h151M0 90h151M0 98h151M0 106h151"/></g><path d="M20 0v113" stroke="#e8c4c8" stroke-width="0.6"/>
 <g fill="#2f4a66"><circle cx="9" cy="9" r="2.5"/><circle cx="9" cy="17" r="2.5"/><circle cx="9" cy="25" r="2.5"/><circle cx="9" cy="33" r="2.5"/><circle cx="9" cy="41" r="2.5"/><circle cx="9" cy="49" r="2.5"/><circle cx="9" cy="57" r="2.5"/><circle cx="9" cy="65" r="2.5"/><circle cx="9" cy="73" r="2.5"/><circle cx="9" cy="81" r="2.5"/><circle cx="9" cy="89" r="2.5"/><circle cx="9" cy="97" r="2.5"/><circle cx="9" cy="105" r="2.5"/></g>
 <circle cx="36" cy="17" r="4" fill="#f8ec78"/><rect x="40" y="22" width="26" height="14" fill="#fdf5d0"/>
 <rect x="99" y="14" width="30" height="20" fill="#a6e0f6"/><circle cx="96" cy="15" r="4" fill="#4aa2d8"/>
 <rect x="23" y="49" width="30" height="20" fill="#f6c0dc"/><circle cx="22" cy="49" r="4" fill="#e070b8"/>
 <rect x="106" y="48" width="32" height="20" fill="#fad0cc"/><circle cx="106" cy="49" r="4" fill="#ee7a7a"/>
 <rect x="37" y="73" width="28" height="18" fill="#d6f5c0"/><circle cx="35" cy="74" r="4" fill="#a8e070"/>
 <rect x="96" y="74" width="30" height="20" fill="#dcc8f4"/><circle cx="94" cy="74" r="4" fill="#b88ae6"/>
 <text x="74" y="58" font-size="8" font-weight="bold" text-anchor="middle" fill="#222" font-family="Liberation Sans">MAPA MENTAL</text></svg>
<svg class="a" style="left:96px;top:778px" width="152" height="114" viewBox="0 0 152 114"><rect width="152" height="114" fill="#fff"/>
 <g fill="#fff" stroke="#b8485a" stroke-width="0.8"><rect x="16" y="12" width="32" height="6"/><rect x="104" y="12" width="32" height="6"/><rect x="16" y="78" width="32" height="6"/></g>
 <g fill="#fff" stroke="#555" stroke-width="0.8"><rect x="60" y="8" width="32" height="6"/><rect x="60" y="80" width="32" height="6"/><rect x="108" y="45" width="32" height="6"/></g>
 <g fill="#fff" stroke="#a0c860" stroke-width="0.8"><rect x="10" y="45" width="32" height="6"/><rect x="104" y="78" width="32" height="6"/></g>
 <text x="76" y="56" font-size="6" text-anchor="middle" fill="#222" font-family="Liberation Sans">MAPA</text><text x="76" y="64" font-size="6.5" text-anchor="middle" fill="#222" font-family="Liberation Sans">CONCEPTUAL</text>
 <g stroke="#aaa" stroke-width="0.6"><path d="M18 22h30M18 26h30M18 30h30M62 18h30M62 22h30M62 26h30M104 22h30M104 26h30M104 30h30M12 55h32M12 59h32M12 63h32M108 55h32M108 59h32M18 88h30M18 92h30M18 96h30M62 90h30M62 94h30M62 98h30M104 88h30M104 92h30"/></g>
 <g stroke="#222" stroke-width="0.9"><path d="M55 40l6 6M97 40l-6 6M76 34v6M50 58h6M96 58h6M55 76l6-6M97 76l-6-6M76 70v6"/></g></svg>
<svg class="a" style="left:256px;top:778px" width="151" height="114" viewBox="0 0 151 114"><rect width="151" height="114" fill="#f3f0e8"/>
 <text x="75" y="20" font-size="6.5" text-anchor="middle" fill="#444" font-family="Liberation Sans">Company Organization</text>
 <rect x="60" y="28" width="31" height="8" rx="3" fill="#c8bfe8"/>
 <g fill="#e8dcc6"><rect x="18" y="42" width="26" height="8" rx="3"/><rect x="63" y="42" width="25" height="8" rx="3"/><rect x="106" y="42" width="26" height="8" rx="3"/></g>
 <g fill="#efc2c8"><rect x="18" y="59" width="26" height="8" rx="3"/><rect x="63" y="59" width="25" height="8" rx="3"/><rect x="106" y="59" width="26" height="8" rx="3"/></g>
 <g fill="#c4d4ea"><rect x="6" y="75" width="24" height="9" rx="3"/><rect x="34" y="75" width="24" height="9" rx="3"/><rect x="63" y="75" width="25" height="9" rx="3"/><rect x="92" y="75" width="25" height="9" rx="3"/><rect x="121" y="75" width="25" height="9" rx="3"/></g>
 <g fill="#cfe6c4"><rect x="17" y="91" width="25" height="8" rx="3"/><rect x="48" y="91" width="25" height="8" rx="3"/><rect x="77" y="91" width="25" height="8" rx="3"/><rect x="106" y="91" width="25" height="8" rx="3"/></g>
 <rect x="120" y="94" width="28" height="16" rx="8" fill="#3a3c42"/><path d="M127 106h14l1.5-8-4 3-3.5-5-3.5 5-4-3z" fill="#f0b840"/></svg>
<svg class="a" style="left:96px;top:900px" width="152" height="114" viewBox="0 0 152 114"><rect width="152" height="114" fill="#1f2022"/><rect x="1" y="1" width="150" height="112" fill="none" stroke="#3c3d40" stroke-width="0.8"/>
 <g fill="none" stroke-width="0.9"><circle cx="57" cy="33" r="20" stroke="#d8c860"/><circle cx="92" cy="33" r="20" stroke="#58b888"/><circle cx="40" cy="59" r="20" stroke="#d8a860"/><circle cx="75" cy="58" r="22" stroke="#70c8a0"/><circle cx="110" cy="59" r="20" stroke="#8848a8"/><circle cx="58" cy="86" r="20" stroke="#a05880"/><circle cx="92" cy="86" r="20" stroke="#6858b8"/></g>
 <text x="75" y="57" font-size="5" text-anchor="middle" fill="#c8f0e8" font-family="Liberation Sans">TÍTULO</text><text x="75" y="63" font-size="5" text-anchor="middle" fill="#c8f0e8" font-family="Liberation Sans">PRINCIPAL</text>
 <rect x="120" y="95" width="28" height="16" rx="8" fill="#111"/><path d="M127 107h14l1.5-8-4 3-3.5-5-3.5 5-4-3z" fill="#f0b840"/></svg>
<svg class="a" style="left:256px;top:900px" width="151" height="114" viewBox="0 0 151 114"><rect width="151" height="114" fill="#e6b6dd"/>
 <text x="7" y="54" font-size="8.5" font-weight="bold" fill="#3a2a4a" font-family="Liberation Sans">Business</text><path d="M10 64c5-6 9 4 14-2s8 3 12-1 6 2 8-1" stroke="#6a4a7a" stroke-width="0.6" fill="none"/>
 <path d="M55 20v82M55 24h10M55 58h10M55 91h10M105 10v30M105 45v30M105 80v30" stroke="#9a7a98" stroke-width="0.6" fill="none"/>
 <rect x="64" y="13" width="33" height="13" fill="#a8dcc8"/><rect x="64" y="48" width="33" height="13" fill="#f6d498"/><rect x="64" y="84" width="33" height="13" fill="#b6d4e6"/>
 <g fill="#7ad6a0"><rect x="112" y="4" width="32" height="10"/><rect x="112" y="15" width="32" height="10"/><rect x="112" y="26" width="32" height="10"/></g>
 <g fill="#f6c27a"><rect x="112" y="40" width="32" height="10"/><rect x="112" y="51" width="32" height="10"/><rect x="112" y="62" width="32" height="10"/></g>
 <g fill="#a6cce6"><rect x="112" y="76" width="32" height="10"/><rect x="112" y="87" width="32" height="10"/><rect x="112" y="98" width="32" height="10"/></g>
 <rect x="119" y="95" width="28" height="16" rx="8" fill="#3a3c42"/><path d="M126 107h14l1.5-8-4 3-3.5-5-3.5 5-4-3z" fill="#f0b840"/></svg>
<div class="a" style="left:96px;top:1022px;width:152px;height:18px;background:#ebebeb"></div>
<div class="a" style="left:256px;top:1022px;width:151px;height:18px;background:#f1eee6"></div>
<!-- collapse handle -->
<svg class="a" style="left:432px;top:555px" width="14" height="86" viewBox="0 0 14 86"><path d="M0 0 C0 10 12 12 12 22 V64 C12 74 0 76 0 86Z" fill="#252627"/><path d="M7 39l-3 4 3 4" stroke="#fff" stroke-width="1.3" fill="none"/></svg>
<div id="posbar" class="a"><div class="t" style="left:16px;top:16px;font-size:15px;color:#1d1d1f">Posición</div></div>
<div class="a" style="left:754px;top:265px;width:828px;height:621px;border:2px solid #11205a;background:#fff"></div>
<div class="a" style="left:756px;top:267px;width:824px;height:617px;overflow:hidden"><div class="dz" style="position:absolute;left:0;top:0;width:824px;height:617px;background:#fff;overflow:hidden">
 <svg style="position:absolute;left:0;top:0" width="824" height="617" viewBox="0 0 824 617">
  <path d="M0 0 H200 C214 2 221 20 220 64 C219 95 205 118 170 123 C130 127 70 118 35 117 C18 117 8 124 0 130 Z" fill="#d9f6f6"/>
  <g fill="#1ec8be"><circle cx="5" cy="11" r="5"/><circle cx="28" cy="5" r="4"/><circle cx="21" cy="19" r="6"/><circle cx="43" cy="17" r="5"/><circle cx="5" cy="32" r="5"/><circle cx="27" cy="41" r="5"/><circle cx="7" cy="51" r="5"/></g>
  <path d="M667 0 H824 V155 C815 120 803 92 775 68 C750 50 705 36 682 18 C672 10 667 4 667 0Z" fill="#fdf7d2"/>
  <g fill="#f4e35e"><circle cx="688" cy="15" r="4"/><circle cx="706" cy="9" r="4.5"/><circle cx="725" cy="4" r="4"/><circle cx="721" cy="19" r="4.5"/><circle cx="703" cy="31" r="4.5"/><circle cx="718" cy="40" r="5"/><circle cx="737" cy="17" r="4"/><circle cx="752" cy="8" r="4"/><circle cx="760" cy="26" r="4"/><circle cx="780" cy="12" r="4"/></g>
  <path d="M668 617 C668 580 675 560 690 550 C710 540 740 538 764 537 C790 530 810 515 824 510 V617Z" fill="#d5f7c5"/>
  <g fill="#76d653"><circle cx="789" cy="490" r="4.5"/><circle cx="820" cy="484" r="4.5"/><circle cx="811" cy="500" r="5"/><circle cx="792" cy="511" r="4.5"/><circle cx="774" cy="515" r="4"/><circle cx="808" cy="522" r="4.5"/><circle cx="822" cy="515" r="4"/><circle cx="789" cy="529" r="5"/><circle cx="771" cy="535" r="4.5"/><circle cx="804" cy="539" r="4.5"/><circle cx="820" cy="537" r="4"/><circle cx="786" cy="551" r="5"/><circle cx="800" cy="560" r="5"/><circle cx="822" cy="556" r="4"/><circle cx="760" cy="500" r="3.5"/></g>
  <path d="M347 573 L390 561 L440 548 L500 537 L547 531 L600 528 L626 527 L660 536 L672 542 L668 548 L675 555 L640 560 L622 562 L553 570 L500 577 L462 580 L430 584 L412 584 L380 578 L347 575Z" fill="#75d5dc"/>
  <g fill="#fff" opacity="0.6"><rect x="470" y="566" width="5" height="1"/><rect x="515" y="560" width="4" height="1"/><rect x="580" y="552" width="5" height="1"/><rect x="640" y="545" width="4" height="1"/></g>
  <!-- pencil -->
  <path d="M587 130 A73 70 0 0 1 733 130 V151 H587Z" fill="#f5959f"/>
  <rect x="587" y="129" width="146" height="22" fill="#e4749a"/>
  <rect x="587" y="151" width="146" height="59" fill="#fde72b"/><rect x="635" y="151" width="48" height="59" fill="#f2c73f"/>
  <rect x="587" y="210" width="146" height="73" fill="#6cd445"/><rect x="635" y="210" width="48" height="73" fill="#4dc24e"/>
  <rect x="587" y="283" width="146" height="72" fill="#dd5a6d"/><rect x="635" y="283" width="48" height="72" fill="#d84d50"/>
  <rect x="587" y="355" width="146" height="66" fill="#5cdcd3"/><rect x="635" y="355" width="48" height="66" fill="#4ab3cc"/>
  <path d="M587 421 H733 L700 484 H620Z" fill="#eeeadd"/>
  <path d="M620 484 H700 L680 522 C672 533 648 533 640 522Z" fill="#15a799"/>
  <g fill="#fff" font-family="Liberation Sans" font-weight="bold" font-size="40" text-anchor="middle"><text x="661" y="196">1</text><text x="661" y="262">2</text><text x="661" y="333">3</text><text x="661" y="397">4</text></g>
  <!-- connectors -->
  <g stroke-width="2.4" stroke-dasharray="6 4" fill="none">
   <path d="M278 181 L573 187" stroke="#e6b94c"/>
   <path d="M534 251 L573 252" stroke="#1a9a4c"/>
   <path d="M279 355 L573 332" stroke="#e0455c"/>
   <path d="M542 412 L574 394" stroke="#2fc3c3"/>
   <path d="M359 530 L486 530" stroke="#1b9e8f"/>
  </g>
  <g><circle cx="278" cy="181" r="4.5" fill="#e6b94c"/><circle cx="573" cy="187" r="4.5" fill="#e6b94c"/>
  <circle cx="534" cy="251" r="4.5" fill="#1a9a4c"/><circle cx="573" cy="252" r="4.5" fill="#1a9a4c"/>
  <circle cx="279" cy="355" r="4.5" fill="#e0455c"/><circle cx="573" cy="332" r="4.5" fill="#e0455c"/>
  <circle cx="542" cy="412" r="4.5" fill="#2fc3c3"/><circle cx="574" cy="394" r="4.5" fill="#2fc3c3"/>
  <circle cx="359" cy="530" r="4.5" fill="#1b9e8f"/><circle cx="486" cy="530" r="4.5" fill="#1b9e8f"/></g>
 </svg>
 <div class="dt" style="left:40px;top:61px;width:573px;font-size:34.3px;line-height:43px;font-weight:bold;color:#2b5c8b;text-align:center">PRIMERA SESIÓN DIVISIÓN:<br>"SOMOS PIRATAS"</div>
 <div class="db" style="left:91px;top:160px;width:170px;height:160px;background:#fdf3c1"></div>
 <div class="dt" style="left:91px;top:171px;width:170px;text-align:center;font-size:15px;color:#151515">PLICKER</div>
 <div class="dt" style="left:94px;top:198px;width:170px;font-size:12px;line-height:14.5px;color:#3a3a3a">plicker con preguntas iniciales<br>sobre los conocimientos que<br>ya deben tener acerca del<br>concepto de división. Nos<br>llevará 5 minutos pasarlo y<br>nos dará información del nivel<br>del que debemos partir.</div>
 <div class="db" style="left:276px;top:234px;width:243px;height:92px;background:#d5f5c5"></div>
 <div class="dt" style="left:276px;top:238px;width:243px;text-align:center;font-size:14.3px;color:#151515">ORGANIZACIÓN</div>
 <div class="dt" style="left:266px;top:256px;width:263px;text-align:center;font-size:12px;line-height:14.8px;color:#3a3a3a">la teatralización:<br>agrupamiento homogéneo porque<br>queremos que sea un reto para todos<br>los alumnos, que navdie se aburra ni<br>que sienta que no llega.</div>
 <div class="db" style="left:94px;top:337px;width:171px;height:160px;background:#f8bdc8"></div>
 <div class="dt" style="left:94px;top:350px;width:171px;text-align:center;font-size:14.3px;color:#151515">DESARROLLO</div>
 <div class="dt" style="left:84px;top:364px;width:191px;text-align:center;font-size:12px;line-height:15px;color:#3a3a3a">Cada equipo tendrá una<br>situación diferente.<br>Empezaremos con  los alumnos<br>que tienen mayores dificultades<br>situaciones de reparto,mientras<br>que aquellos de nivel mayor,<br>podrán comenzar con<br>situaciones de reparto de tipo<br>cuantifico entero</div>
 <div class="db" style="left:285px;top:397px;width:243px;height:91px;background:#d8f4f6"></div>
 <div class="dt" style="left:285px;top:399px;width:243px;text-align:center;font-size:14.3px;color:#151515">PRÁCTICA DOCENTE</div>
 <div class="dt" style="left:275px;top:422px;width:263px;text-align:center;font-size:12px;line-height:15px;color:#3a3a3a">Graduando las situaciones de tipo<br>partitivo entero y cuotitivo exacto, a<br>los grupos intermedios</div>
 <div class="db" style="left:95px;top:510px;width:244px;height:68px;background:#d6f0ee"></div>
 <div class="dt" style="left:95px;top:525px;width:244px;text-align:center;font-size:14.5px;line-height:19px;color:#111">Evaluación: rubricas E-valuM<br>con heteroevaluación.</div>
</div>
</div>
<svg class="a" style="left:1489px;top:239px" width="12" height="16" viewBox="0 0 12 16"><path d="M3 7V4.5a3 3 0 0 1 6 0" stroke="#5a5a60" stroke-width="1.4" fill="none"/><rect x="1" y="7" width="10" height="8" rx="1" stroke="#5a5a60" stroke-width="1.4" fill="none"/></svg>
<div class="a" style="left:755px;top:911px;width:826px;height:39px;background:#e1e2e6;border-radius:4px"></div>
<div class="t" style="left:755px;top:922px;width:826px;text-align:center;font-size:14.5px;font-weight:bold;color:#1d1d1f">+ Añadir página</div>
<div class="a" style="left:1852px;top:931px;width:43px;height:43px;border-radius:50%;background:#fff;border:2px solid #4f4fa8"></div>
<svg class="a" style="left:1862px;top:942px" width="23" height="23" viewBox="0 0 23 23"><path d="M11.5 5.5c.6 3.5 1.8 4.8 5.3 5.5-3.5.7-4.7 2-5.3 5.5-.6-3.5-1.8-4.8-5.3-5.5 3.5-.7 4.7-2 5.3-5.5z" fill="#4656d6"/><path d="M6 2.5c.3 1.3.7 1.8 2 2-1.3.3-1.7.7-2 2-.3-1.3-.7-1.7-2-2 1.3-.2 1.7-.7 2-2z" fill="#4a4f8a"/><circle cx="17.5" cy="5" r="1.1" fill="#4a4f8a"/><circle cx="5.5" cy="15" r="1.1" fill="#4a4f8a"/></svg>
<div class="a" style="left:432px;top:977px;width:1472px;height:23px;background:#f0f0f2"></div>
<svg class="a" style="left:437px;top:986px" width="6" height="8" viewBox="0 0 6 8"><path d="M5 0v8L0 4z" fill="#a0a0a6"/></svg>
<svg class="a" style="left:1890px;top:986px" width="6" height="8" viewBox="0 0 6 8"><path d="M0 0v8l5-4z" fill="#a0a0a6"/></svg>
<svg class="a" style="left:1908px;top:971px" width="8" height="6" viewBox="0 0 8 6"><path d="M0 0h8L4 5z" fill="#a0a0a6"/></svg>
<div class="a" style="left:1904px;top:208px;width:16px;height:775px;background:#eeeff2"></div><div class="a" style="left:1904px;top:983px;width:16px;height:16px;background:#dcdde0"></div>
<svg class="a" style="left:1145px;top:988px" width="64" height="12" viewBox="0 0 64 12"><path d="M0 12 C10 12 12 0 24 0 H40 C52 0 54 12 64 12Z" fill="#fff"/><path d="M27 7.5l4-3.5 4 3.5" stroke="#1d1d1f" stroke-width="1.3" fill="none"/></svg>
<div id="botbar" class="a">
 <svg class="a" style="left:15px;top:12px" width="20" height="18" viewBox="0 0 20 18"><path d="M1 2h12M1 6h9M1 10h6M1 14h5" stroke="#1d1d1f" stroke-width="1.5"/><path d="M9 16l1-4 7-7 3 3-7 7z" stroke="#1d1d1f" stroke-width="1.5" fill="none" stroke-linejoin="round"/></svg>
 <div class="t" style="left:41px;top:12px;font-size:15px;color:#1d1d1f">Notas</div>
 <div class="t" style="left:959px;top:12px;font-size:15px;color:#1d1d1f">Página 1 de 1</div>
 <div class="a" style="left:1063px;top:9px;width:1px;height:22px;background:#d8d9dc"></div>
 <div class="a" style="left:1080px;top:20px;width:200px;height:2px;background:#c9cacd"></div>
 <div class="a" style="left:1080px;top:20px;width:105px;height:2px;background:#8d8e92"></div>
 <div class="a" style="left:1179px;top:14px;width:13px;height:13px;border-radius:50%;background:#111"></div>
 <div class="t" style="left:1304px;top:12px;font-size:15px;color:#1d1d1f">81 %</div>
 <svg class="a" style="left:1367px;top:11px" width="18" height="18" viewBox="0 0 18 18"><g fill="none" stroke="#1d1d1f" stroke-width="1.6"><rect x="1" y="1" width="6.5" height="6.5" rx="1.5"/><rect x="10.5" y="1" width="6.5" height="6.5" rx="1.5"/><rect x="1" y="10.5" width="6.5" height="6.5" rx="1.5"/><rect x="10.5" y="10.5" width="6.5" height="6.5" rx="1.5"/></g></svg>
 <svg class="a" style="left:1406px;top:10px" width="20" height="20" viewBox="0 0 20 20"><path d="M12 2h6v6M18 2l-6.5 6.5M8 18H2v-6M2 18l6.5-6.5" stroke="#1d1d1f" stroke-width="1.7" fill="none"/></svg>
 <svg class="a" style="left:1452px;top:9px" width="22" height="22" viewBox="0 0 22 22"><circle cx="11" cy="11" r="9.8" stroke="#1d1d1f" stroke-width="1.6" fill="none"/><path d="M8 8.5a3 3 0 1 1 4.2 2.7c-.8.4-1.2 1-1.2 2V14" stroke="#1d1d1f" stroke-width="1.6" fill="none"/><circle cx="11" cy="16.6" r="1.1" fill="#1d1d1f"/></svg>
</div>
<!-- PRESENT PANEL -->
<div class="a" style="left:1495px;top:159px;width:417px;height:532px;background:#fff;border-radius:0 0 8px 8px;box-shadow:0 2px 8px rgba(0,0,0,0.12),0 0 1px rgba(0,0,0,0.2)">
 <svg class="a" style="left:19px;top:15px" width="12" height="18" viewBox="0 0 12 18"><path d="M9.5 1.5L2 9l7.5 7.5" stroke="#1d1d1f" stroke-width="1.8" fill="none"/></svg>
 <div class="t" style="left:47px;top:15px;font-size:15px;color:#1d1d1f">Presentar</div>
 <div class="a" style="left:0;top:44px;width:417px;height:1px;background:#e3e4e7"></div>
 <div class="a" style="left:54px;top:72px;width:48px;height:48px;border-radius:50%;background:#f0f0f3;border:2px solid #6c46d8"></div>
 <svg class="a" style="left:69px;top:87px" width="18" height="18" viewBox="0 0 18 18"><path d="M11 1.5h5.5V7M16.5 1.5L10.5 7.5M7 16.5H1.5V11M1.5 16.5l6-6" stroke="#111" stroke-width="1.7" fill="none"/></svg>
 <div class="t" style="left:0;top:128px;width:156px;text-align:center;font-size:13px;line-height:20px;color:#5f6065">Presentar a<br>pantalla completa</div>
 <div class="a" style="left:185px;top:72px;width:48px;height:48px;border-radius:50%;background:#f1f1f3"></div>
 <svg class="a" style="left:198px;top:86px" width="22" height="20" viewBox="0 0 22 20"><rect x="2" y="6" width="15" height="11" rx="2" stroke="#111" stroke-width="1.7" fill="none"/><path d="M5 3h13a2 2 0 0 1 2 2v8" stroke="#111" stroke-width="1.7" fill="none"/><path d="M8 9l4 2.5-4 2.5z" fill="#111"/></svg>
 <div class="t" style="left:131px;top:128px;width:156px;text-align:center;font-size:13px;line-height:20px;color:#5f6065">Modo<br>presentación</div>
 <div class="a" style="left:316px;top:72px;width:48px;height:48px;border-radius:50%;background:#f1f1f3"></div>
 <svg class="a" style="left:329px;top:88px" width="22" height="16" viewBox="0 0 22 16"><rect x="1.5" y="2" width="13" height="12" rx="2" stroke="#111" stroke-width="1.8" fill="none"/><path d="M14.5 6l6-3.5v11l-6-3.5z" stroke="#111" stroke-width="1.8" fill="none" stroke-linejoin="round"/></svg>
 <div class="t" style="left:262px;top:128px;width:156px;text-align:center;font-size:13px;line-height:20px;color:#5f6065">Presentar y grabar</div>
 <div class="a" style="left:17px;top:184px;width:384px;height:242px;background:#f3f4f6;border:1px solid #e2e3e6"><div class="a" style="left:0;top:0;width:382px;height:16px;background:#e8e9ec"></div><div class="a" style="left:0;top:16px;width:6px;height:224px;background:#e8e9ec"></div><div class="a" style="left:9px;top:5px;width:20px;height:5px;background:#dcdde0;border-radius:2px"></div></div>
 <div class="a" style="left:57px;top:200px;width:303px;height:226px;overflow:hidden;background:#fff"><div style="position:absolute;left:0;top:0;width:824px;height:617px;transform:scale(0.3677);transform-origin:0 0"><div class="dz" style="position:absolute;left:0;top:0;width:824px;height:617px;background:#fff;overflow:hidden">
 <svg style="position:absolute;left:0;top:0" width="824" height="617" viewBox="0 0 824 617">
  <path d="M0 0 H200 C214 2 221 20 220 64 C219 95 205 118 170 123 C130 127 70 118 35 117 C18 117 8 124 0 130 Z" fill="#d9f6f6"/>
  <g fill="#1ec8be"><circle cx="5" cy="11" r="5"/><circle cx="28" cy="5" r="4"/><circle cx="21" cy="19" r="6"/><circle cx="43" cy="17" r="5"/><circle cx="5" cy="32" r="5"/><circle cx="27" cy="41" r="5"/><circle cx="7" cy="51" r="5"/></g>
  <path d="M667 0 H824 V155 C815 120 803 92 775 68 C750 50 705 36 682 18 C672 10 667 4 667 0Z" fill="#fdf7d2"/>
  <g fill="#f4e35e"><circle cx="688" cy="15" r="4"/><circle cx="706" cy="9" r="4.5"/><circle cx="725" cy="4" r="4"/><circle cx="721" cy="19" r="4.5"/><circle cx="703" cy="31" r="4.5"/><circle cx="718" cy="40" r="5"/><circle cx="737" cy="17" r="4"/><circle cx="752" cy="8" r="4"/><circle cx="760" cy="26" r="4"/><circle cx="780" cy="12" r="4"/></g>
  <path d="M668 617 C668 580 675 560 690 550 C710 540 740 538 764 537 C790 530 810 515 824 510 V617Z" fill="#d5f7c5"/>
  <g fill="#76d653"><circle cx="789" cy="490" r="4.5"/><circle cx="820" cy="484" r="4.5"/><circle cx="811" cy="500" r="5"/><circle cx="792" cy="511" r="4.5"/><circle cx="774" cy="515" r="4"/><circle cx="808" cy="522" r="4.5"/><circle cx="822" cy="515" r="4"/><circle cx="789" cy="529" r="5"/><circle cx="771" cy="535" r="4.5"/><circle cx="804" cy="539" r="4.5"/><circle cx="820" cy="537" r="4"/><circle cx="786" cy="551" r="5"/><circle cx="800" cy="560" r="5"/><circle cx="822" cy="556" r="4"/><circle cx="760" cy="500" r="3.5"/></g>
  <path d="M347 573 L390 561 L440 548 L500 537 L547 531 L600 528 L626 527 L660 536 L672 542 L668 548 L675 555 L640 560 L622 562 L553 570 L500 577 L462 580 L430 584 L412 584 L380 578 L347 575Z" fill="#75d5dc"/>
  <g fill="#fff" opacity="0.6"><rect x="470" y="566" width="5" height="1"/><rect x="515" y="560" width="4" height="1"/><rect x="580" y="552" width="5" height="1"/><rect x="640" y="545" width="4" height="1"/></g>
  <!-- pencil -->
  <path d="M587 130 A73 70 0 0 1 733 130 V151 H587Z" fill="#f5959f"/>
  <rect x="587" y="129" width="146" height="22" fill="#e4749a"/>
  <rect x="587" y="151" width="146" height="59" fill="#fde72b"/><rect x="635" y="151" width="48" height="59" fill="#f2c73f"/>
  <rect x="587" y="210" width="146" height="73" fill="#6cd445"/><rect x="635" y="210" width="48" height="73" fill="#4dc24e"/>
  <rect x="587" y="283" width="146" height="72" fill="#dd5a6d"/><rect x="635" y="283" width="48" height="72" fill="#d84d50"/>
  <rect x="587" y="355" width="146" height="66" fill="#5cdcd3"/><rect x="635" y="355" width="48" height="66" fill="#4ab3cc"/>
  <path d="M587 421 H733 L700 484 H620Z" fill="#eeeadd"/>
  <path d="M620 484 H700 L680 522 C672 533 648 533 640 522Z" fill="#15a799"/>
  <g fill="#fff" font-family="Liberation Sans" font-weight="bold" font-size="40" text-anchor="middle"><text x="661" y="196">1</text><text x="661" y="262">2</text><text x="661" y="333">3</text><text x="661" y="397">4</text></g>
  <!-- connectors -->
  <g stroke-width="2.4" stroke-dasharray="6 4" fill="none">
   <path d="M278 181 L573 187" stroke="#e6b94c"/>
   <path d="M534 251 L573 252" stroke="#1a9a4c"/>
   <path d="M279 355 L573 332" stroke="#e0455c"/>
   <path d="M542 412 L574 394" stroke="#2fc3c3"/>
   <path d="M359 530 L486 530" stroke="#1b9e8f"/>
  </g>
  <g><circle cx="278" cy="181" r="4.5" fill="#e6b94c"/><circle cx="573" cy="187" r="4.5" fill="#e6b94c"/>
  <circle cx="534" cy="251" r="4.5" fill="#1a9a4c"/><circle cx="573" cy="252" r="4.5" fill="#1a9a4c"/>
  <circle cx="279" cy="355" r="4.5" fill="#e0455c"/><circle cx="573" cy="332" r="4.5" fill="#e0455c"/>
  <circle cx="542" cy="412" r="4.5" fill="#2fc3c3"/><circle cx="574" cy="394" r="4.5" fill="#2fc3c3"/>
  <circle cx="359" cy="530" r="4.5" fill="#1b9e8f"/><circle cx="486" cy="530" r="4.5" fill="#1b9e8f"/></g>
 </svg>
 <div class="dt" style="left:40px;top:61px;width:573px;font-size:34.3px;line-height:43px;font-weight:bold;color:#2b5c8b;text-align:center">PRIMERA SESIÓN DIVISIÓN:<br>"SOMOS PIRATAS"</div>
 <div class="db" style="left:91px;top:160px;width:170px;height:160px;background:#fdf3c1"></div>
 <div class="dt" style="left:91px;top:171px;width:170px;text-align:center;font-size:15px;color:#151515">PLICKER</div>
 <div class="dt" style="left:94px;top:198px;width:170px;font-size:12px;line-height:14.5px;color:#3a3a3a">plicker con preguntas iniciales<br>sobre los conocimientos que<br>ya deben tener acerca del<br>concepto de división. Nos<br>llevará 5 minutos pasarlo y<br>nos dará información del nivel<br>del que debemos partir.</div>
 <div class="db" style="left:276px;top:234px;width:243px;height:92px;background:#d5f5c5"></div>
 <div class="dt" style="left:276px;top:238px;width:243px;text-align:center;font-size:14.3px;color:#151515">ORGANIZACIÓN</div>
 <div class="dt" style="left:266px;top:256px;width:263px;text-align:center;font-size:12px;line-height:14.8px;color:#3a3a3a">la teatralización:<br>agrupamiento homogéneo porque<br>queremos que sea un reto para todos<br>los alumnos, que navdie se aburra ni<br>que sienta que no llega.</div>
 <div class="db" style="left:94px;top:337px;width:171px;height:160px;background:#f8bdc8"></div>
 <div class="dt" style="left:94px;top:350px;width:171px;text-align:center;font-size:14.3px;color:#151515">DESARROLLO</div>
 <div class="dt" style="left:84px;top:364px;width:191px;text-align:center;font-size:12px;line-height:15px;color:#3a3a3a">Cada equipo tendrá una<br>situación diferente.<br>Empezaremos con  los alumnos<br>que tienen mayores dificultades<br>situaciones de reparto,mientras<br>que aquellos de nivel mayor,<br>podrán comenzar con<br>situaciones de reparto de tipo<br>cuantifico entero</div>
 <div class="db" style="left:285px;top:397px;width:243px;height:91px;background:#d8f4f6"></div>
 <div class="dt" style="left:285px;top:399px;width:243px;text-align:center;font-size:14.3px;color:#151515">PRÁCTICA DOCENTE</div>
 <div class="dt" style="left:275px;top:422px;width:263px;text-align:center;font-size:12px;line-height:15px;color:#3a3a3a">Graduando las situaciones de tipo<br>partitivo entero y cuotitivo exacto, a<br>los grupos intermedios</div>
 <div class="db" style="left:95px;top:510px;width:244px;height:68px;background:#d6f0ee"></div>
 <div class="dt" style="left:95px;top:525px;width:244px;text-align:center;font-size:14.5px;line-height:19px;color:#111">Evaluación: rubricas E-valuM<br>con heteroevaluación.</div>
</div>
</div></div>
 <div class="t" style="left:17px;top:436px;font-size:15.2px;color:#55565b">Presenta a pantalla completa y a tu ritmo</div>
 <div class="a" style="left:17px;top:476px;width:384px;height:40px;border-radius:5px;background:#7d2ae8"></div>
 <div class="t" style="left:17px;top:487px;width:384px;text-align:center;font-size:14.5px;font-weight:bold;color:#fbe8ff">Presentar</div>
</div>
<!-- cursor -->
<svg class="a" style="left:1675px;top:592px" width="13" height="20" viewBox="0 0 13 20"><path d="M1 1v16l4-4 3 6 2-1-3-6h5z" fill="#fff" stroke="#111" stroke-width="1"/></svg>
<div id="taskbar" class="a">
 <svg class="a" style="left:16px;top:12px" width="17" height="17" viewBox="0 0 17 17"><path d="M0 2.4L7 1.4V8H0zM8 1.3L17 0V8H8zM0 9h7v6.6L0 14.6zM8 9h9v8l-9-1.3z" fill="#fff"/></svg>
 <svg class="a" style="left:63px;top:11px" width="18" height="18" viewBox="0 0 18 18"><circle cx="10.5" cy="7.5" r="6" stroke="#fff" stroke-width="1.5" fill="none"/><path d="M6.2 11.8L1 17" stroke="#fff" stroke-width="1.7"/></svg>
 <svg class="a" style="left:111px;top:11px" width="18" height="18" viewBox="0 0 18 18"><g stroke="#fff" stroke-width="1.4" fill="none"><rect x="2" y="4" width="10" height="10"/><path d="M0 2h14M0 16h14M16 3v12"/></g></svg>
 <svg class="a" style="left:160px;top:10px" width="21" height="19" viewBox="0 0 21 19"><path d="M1 3h7l2 2h10v13H1z" fill="#f5c342"/><path d="M1 7h19v11H1z" fill="#ffd866"/><rect x="6" y="11" width="9" height="6" fill="#3a9ad9"/></svg>
 <svg class="a" style="left:208px;top:9px" width="22" height="21" viewBox="0 0 22 21"><rect x="7" y="2" width="14" height="17" fill="#fff" stroke="#1d6f42" stroke-width="1"/><path d="M11 5h8M11 8h8M11 11h8M11 14h8" stroke="#1d6f42" stroke-width="1"/><rect x="0" y="4" width="12" height="13" fill="#1d6f42"/><text x="6" y="14.5" font-size="10" font-weight="bold" fill="#fff" text-anchor="middle" font-family="Liberation Sans">X</text></svg>
 <div class="a" style="left:245px;top:0;width:48px;height:40px;background:#3b4252"></div>
 <div class="a" style="left:245px;top:38px;width:48px;height:2px;background:#7fb6e8"></div>
 <svg class="a" style="left:257px;top:8px" width="24" height="24" viewBox="0 0 24 24"><circle cx="12" cy="12" r="11" fill="#db4437"/><path d="M12 12 L2.5 6.5 A11 11 0 0 1 21.5 6.5Z" fill="#db4437"/><path d="M12 12 L21.5 6.5 A11 11 0 0 1 12 23Z" fill="#f4c20d"/><path d="M12 12 L12 23 A11 11 0 0 1 2.5 6.5Z" fill="#0f9d58"/><circle cx="12" cy="12" r="5" fill="#fff"/><circle cx="12" cy="12" r="4" fill="#4285f4"/><circle cx="17" cy="17" r="5" fill="#c8a080"/></svg>
 <svg class="a" style="left:306px;top:8px" width="23" height="23" viewBox="0 0 23 23"><path d="M20 13H7.5a4.5 4.5 0 0 0 8.3 2.2h4A9 9 0 1 1 20 13zM7.5 10h8.5a4.3 4.3 0 0 0-8.5 0z" fill="#2a8ad8"/><path d="M2 16C-1 8 10 0 21 2c-6-1-16 4-17 12" fill="#f4c542"/></svg>
 <svg class="a" style="left:355px;top:9px" width="23" height="21" viewBox="0 0 23 21"><rect x="9" y="3" width="14" height="15" fill="#28a8ea"/><path d="M10 6l6 4 6-4" stroke="#fff" stroke-width="1.4" fill="none"/><rect x="0" y="2" width="13" height="17" fill="#0a64b8"/><text x="6.5" y="14.5" font-size="10" font-weight="bold" fill="#fff" text-anchor="middle" font-family="Liberation Sans">O</text></svg>
 <svg class="a" style="left:404px;top:9px" width="23" height="21" viewBox="0 0 23 21"><rect x="9" y="2" width="14" height="17" fill="#fff"/><path d="M12 5h9M12 8h9M12 11h9M12 14h9" stroke="#2b579a" stroke-width="1"/><rect x="0" y="3" width="13" height="15" fill="#2b579a"/><text x="6.5" y="14.5" font-size="10" font-weight="bold" fill="#fff" text-anchor="middle" font-family="Liberation Sans">W</text></svg>
 <svg class="a" style="left:453px;top:8px" width="24" height="24" viewBox="0 0 24 24"><circle cx="11" cy="11" r="10" fill="#302e31" stroke="#ddd" stroke-width="1.3"/><circle cx="8" cy="8" r="3" fill="none" stroke="#ddd" stroke-width="1.2"/><circle cx="14" cy="9" r="3" fill="none" stroke="#ddd" stroke-width="1.2"/><circle cx="11" cy="14" r="3" fill="none" stroke="#ddd" stroke-width="1.2"/><circle cx="17" cy="17" r="4.5" fill="#e81123"/></svg>
 <div class="a" style="left:445px;top:38px;width:40px;height:2px;background:#7fb6e8"></div>
 <svg class="a" style="left:1731px;top:15px" width="12" height="8" viewBox="0 0 12 8"><path d="M1 7l5-5 5 5" stroke="#fff" stroke-width="1.3" fill="none"/></svg>
 <svg class="a" style="left:1753px;top:12px" width="17" height="16" viewBox="0 0 17 16"><g stroke="#fff" stroke-width="1.2" fill="none"><rect x="4" y="1" width="12" height="9"/><rect x="1" y="4" width="8" height="7"/><path d="M5 11v3M2 14h6"/></g></svg>
 <svg class="a" style="left:1777px;top:12px" width="18" height="16" viewBox="0 0 18 16"><path d="M1 5h3l4-4v14l-4-4H1z" stroke="#fff" stroke-width="1.2" fill="none"/><path d="M11 5c1 1.5 1 4.5 0 6M13.5 3c2 2.5 2 7.5 0 10" stroke="#fff" stroke-width="1.2" fill="none"/></svg>
 <div class="t" style="left:1800px;top:4px;width:60px;text-align:center;font-size:12px;color:#fff">8:10</div>
 <div class="t" style="left:1800px;top:21px;width:60px;text-align:center;font-size:12px;color:#fff">13/06/2023</div>
 <div class="a" style="left:1914px;top:0;width:1px;height:40px;background:#4a4f58"></div>
 <svg class="a" style="left:1879px;top:11px" width="19" height="18" viewBox="0 0 19 18"><path d="M1 1h17v12H9l-4 4v-4H1z" stroke="#fff" stroke-width="1.3" fill="none"/></svg>
</div>
</body></html>
